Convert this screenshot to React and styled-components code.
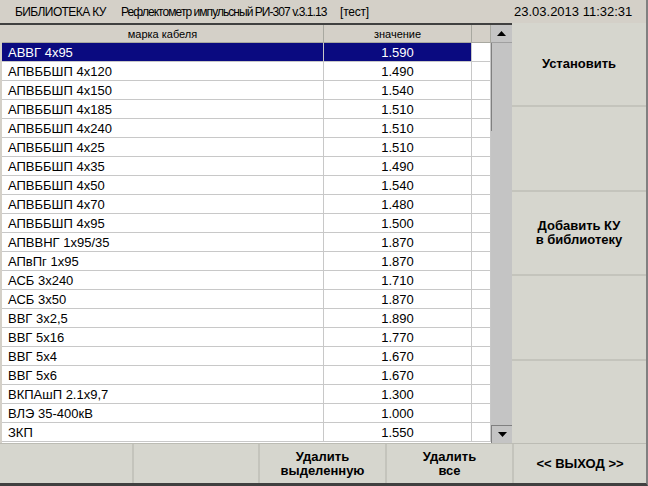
import React from 'react'
import styled, { createGlobalStyle } from 'styled-components'

const GlobalStyle = createGlobalStyle`
  html, body { margin: 0; padding: 0; background: #d4d0c8; }
  body { font-family: Tahoma, "Liberation Sans", "DejaVu Sans", sans-serif; }
`

const Screen = styled.div`
  width: 648px;
  height: 486px;
  display: flex;
  flex-direction: column;
  background: #d4d0c8;
  overflow: hidden;
  box-sizing: border-box;
  border-bottom: 3px solid #404040;
  border-right: 2px solid #808080;
`

const TopBar = styled.div`
  height: 23px;
  display: grid;
  grid-template-columns: 121px 219px 174px 1fr;
  align-items: center;
  color: #000;
  background: #d4d0c8;
  white-space: nowrap;
`

const TopText = styled.span`
  padding-left: ${p => p.left || 0}px;
  font-size: ${p => (p.spacing ? 12 : 13)}px;
  letter-spacing: ${p => (p.spacing ? `${p.spacing}px` : 'normal')};
  overflow: hidden;
`

const Main = styled.div`
  display: flex;
  height: 420px;
`

const TablePanel = styled.div`
  width: 512px;
  display: flex;
  box-sizing: border-box;
  border-top: 2px solid #404040;
  padding-left: 2px;
  background: #d4d0c8;
`

const Grid = styled.div`
  width: 489px;
  background: #fff;
  display: flex;
  flex-direction: column;
`

const Row = styled.div`
  display: grid;
  grid-template-columns: 322px 148px 19px;
  height: ${p => (p.head ? 18 : 19)}px;
  font-size: ${p => (p.head ? 11 : 13)}px;
  background: ${p => (p.head ? '#d4d0c8' : '#fff')};
`

const Cell = styled.div`
  box-sizing: border-box;
  border-right: 1px solid ${p => (p.head ? '#a8a8a0' : '#c8c8c8')};
  border-bottom: 1px solid ${p => (p.head ? '#a8a8a0' : '#c8c8c8')};
  display: flex;
  align-items: center;
  justify-content: ${p => (p.center ? 'center' : 'flex-start')};
  padding-left: ${p => (p.center ? 0 : 6)}px;
  color: ${p => (p.sel ? '#fff' : '#000')};
  background: ${p => (p.sel ? '#0a0a80' : 'transparent')};
  white-space: nowrap;
`

const Scrollbar = styled.div`
  width: 21px;
  display: flex;
  flex-direction: column;
  background: #c4c4c4;
`

const ArrowBtn = styled.div`
  height: 18px;
  display: flex;
  align-items: center;
  justify-content: center;
  background: #c4c4c4;
  box-sizing: border-box;
  border-bottom: ${p => (p.up ? '1px solid #a0a0a0' : 'none')};
  border-top: ${p => (p.up ? 'none' : '1px solid #808080')};
  border-left: ${p => (p.up ? 'none' : '1px solid #808080')};
`

const Track = styled.div`
  flex: 1;
  display: flex;
  flex-direction: column;
`

const Thumb = styled.div`
  height: 88px;
  border-left: 1px solid #808080;
  background: #c4c4c4;
`

const SidePanel = styled.div`
  width: 134px;
  display: flex;
  flex-direction: column;
  background: #d6d6ce;
`

const SideButton = styled.div`
  flex: 1;
  display: flex;
  align-items: center;
  justify-content: center;
  text-align: center;
  font-size: 13px;
  font-weight: bold;
  line-height: 14px;
  color: #000;
  box-sizing: border-box;
  border-bottom: ${p => (p.last ? 'none' : '2px solid #c4c4bc')};
`

const BottomBar = styled.div`
  flex: 1;
  display: grid;
  grid-template-columns: 132px 126px 127px 127px 1fr;
  background: #d6d6ce;
  border-top: 1px solid #bcbcb4;
`

const BottomButton = styled.div`
  display: flex;
  align-items: center;
  justify-content: center;
  text-align: center;
  font-size: 13px;
  font-weight: bold;
  line-height: 14px;
  color: #000;
  box-sizing: border-box;
  border-left: ${p => (p.first ? 'none' : '2px solid #c4c4bc')};
`

const Arrow = ({ up }) => (
  <svg width="9" height="5" viewBox="0 0 9 5">
    <polygon points={up ? '0,5 9,5 4.5,0' : '0,0 9,0 4.5,5'} fill="#000" />
  </svg>
)

const cables = [
  ['АВВГ 4х95', '1.590'],
  ['АПВББШП 4х120', '1.490'],
  ['АПВББШП 4х150', '1.540'],
  ['АПВББШП 4х185', '1.510'],
  ['АПВББШП 4х240', '1.510'],
  ['АПВББШП 4х25', '1.510'],
  ['АПВББШП 4х35', '1.490'],
  ['АПВББШП 4х50', '1.540'],
  ['АПВББШП 4х70', '1.480'],
  ['АПВББШП 4х95', '1.500'],
  ['АПВВНГ 1х95/35', '1.870'],
  ['АПвПг 1х95', '1.870'],
  ['АСБ 3х240', '1.710'],
  ['АСБ 3х50', '1.870'],
  ['ВВГ 3х2,5', '1.890'],
  ['ВВГ 5х16', '1.770'],
  ['ВВГ 5х4', '1.670'],
  ['ВВГ 5х6', '1.670'],
  ['ВКПАшП 2.1х9,7', '1.300'],
  ['ВЛЭ 35-400кВ', '1.000'],
  ['ЗКП', '1.550'],
]

export default function App() {
  return (
    <Screen>
      <GlobalStyle />
      <TopBar>
        <TopText spacing={-0.6} left={15}>БИБЛИОТЕКА КУ</TopText>
        <TopText spacing={-0.95}>Рефлектометр импульсный РИ-307 v.3.1.13</TopText>
        <TopText spacing={-0.2}>[тест]</TopText>
        <TopText>23.03.2013 11:32:31</TopText>
      </TopBar>
      <Main>
        <TablePanel>
          <Grid>
            <Row head>
              <Cell head center>марка кабеля</Cell>
              <Cell head center>значение</Cell>
              <Cell head />
            </Row>
            {cables.map(([name, value], i) => (
              <Row key={name}>
                <Cell sel={i === 0}>{name}</Cell>
                <Cell center sel={i === 0}>{value}</Cell>
                <Cell />
              </Row>
            ))}
          </Grid>
          <Scrollbar>
            <ArrowBtn up>
              <Arrow up />
            </ArrowBtn>
            <Track>
              <Thumb />
            </Track>
            <ArrowBtn>
              <Arrow />
            </ArrowBtn>
          </Scrollbar>
        </TablePanel>
        <SidePanel>
          <SideButton>Установить</SideButton>
          <SideButton />
          <SideButton>
            Добавить КУ
            <br />в библиотеку
          </SideButton>
          <SideButton />
          <SideButton last />
        </SidePanel>
      </Main>
      <BottomBar>
        <BottomButton first />
        <BottomButton />
        <BottomButton>
          Удалить
          <br />
          выделенную
        </BottomButton>
        <BottomButton>
          Удалить
          <br />
          все
        </BottomButton>
        <BottomButton>&lt;&lt; ВЫХОД &gt;&gt;</BottomButton>
      </BottomBar>
    </Screen>
  )
}
